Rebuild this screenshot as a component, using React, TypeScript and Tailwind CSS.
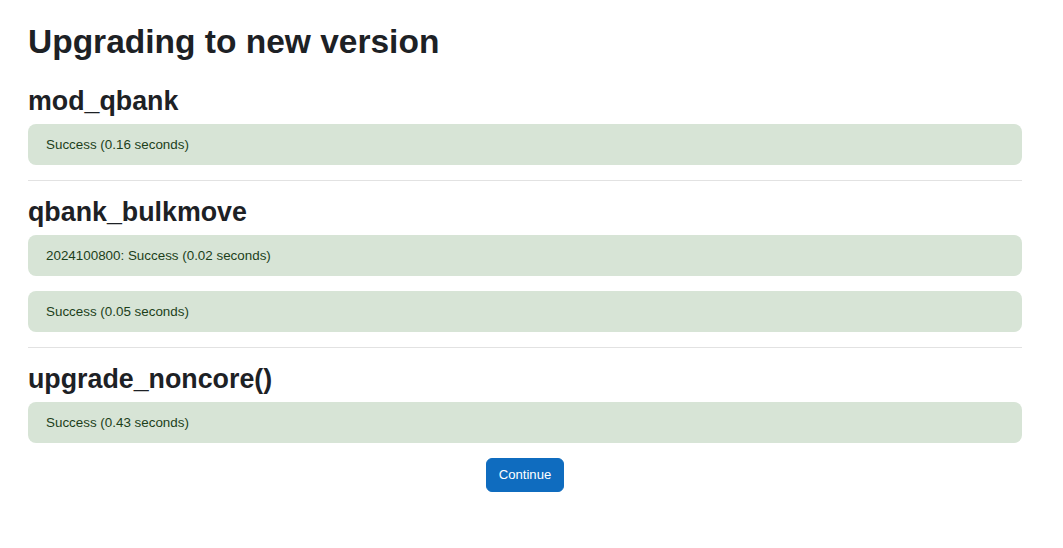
const sections = [
    { title: "mod_qbank", messages: ["Success (0.16 seconds)"] },
    { title: "qbank_bulkmove", messages: ["2024100800: Success (0.02 seconds)", "Success (0.05 seconds)"] },
    { title: "upgrade_noncore()", messages: ["Success (0.43 seconds)"] },
];

function Alert({ text }: { text: string }) {
    return (
        <div className="bg-[#d7e4d6] text-[#1c3f1a] rounded-[8px] pl-[18px] pr-5 py-[10px] mb-[15px] text-[13.4px] leading-[21px]">
            {text}
        </div>
    );
}

export default function App() {
    return (
        <div
            className="min-h-screen bg-white text-[#1d2125] pl-[28px] pr-[41px] pt-[22px]"
            style={{ fontFamily: '"Liberation Sans", Arial, sans-serif' }}
        >
            <h2 className="text-[33.5px] font-bold leading-[1.2] mb-[23.25px]">Upgrading to new version</h2>
            {sections.map((s, i) => (
                <div key={s.title}>
                    {i > 0 && <hr className="border-0 border-t border-[#e2e2e2] mb-[15px]" />}
                    <h3 className="text-[26.8px] font-bold leading-[1.2] mb-[6.75px]">{s.title}</h3>
                    {s.messages.map((m) => (
                        <Alert key={m} text={m} />
                    ))}
                </div>
            ))}
            <div className="flex justify-center">
                <button className="bg-[#0f6cbf] border border-[#0f6cbf] text-white rounded-[6px] px-3 py-[6px] text-[13.125px] leading-[1.5]">
                    Continue
                </button>
            </div>
        </div>
    );
}
